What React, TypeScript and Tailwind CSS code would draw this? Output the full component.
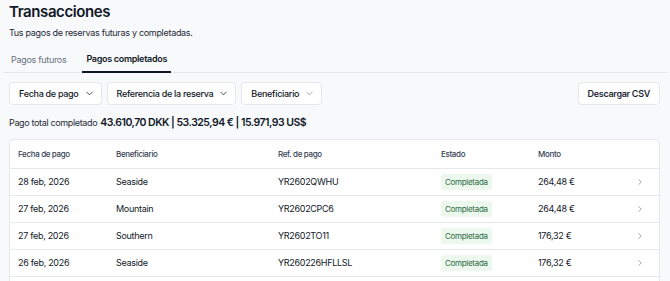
import React from 'react';
import { ChevronDown, ChevronRight } from 'lucide-react';

const rows = [
  { date: '28 feb, 2026', who: 'Seaside', ref: 'YR2602QWHU', amount: '264,48 €' },
  { date: '27 feb, 2026', who: 'Mountain', ref: 'YR2602CPC6', amount: '264,48 €' },
  { date: '27 feb, 2026', who: 'Southern', ref: 'YR2602TO11', amount: '176,32 €' },
  { date: '26 feb, 2026', who: 'Seaside', ref: 'YR260226HFLLSL', amount: '176,32 €' },
];

const cols = 'grid grid-cols-[98px_162px_163px_97px_1fr_24px] items-center pl-[8px]';

const FilterButton: React.FC<{ label: string; light?: boolean }> = ({ label, light }) => (
  <button className="h-[23px] pl-[9px] pr-[6px] flex items-center gap-[5px] bg-white border border-gray-200 rounded-[4px] text-[9px] tracking-[-0.3px] font-medium text-gray-900">
    {label}
    <ChevronDown size={11} strokeWidth={2} className={light ? 'text-gray-400' : 'text-gray-700'} />
  </button>
);

const App: React.FC = () => {
  return (
    <div
      className="min-h-screen bg-[#f8f9fa] text-gray-900 overflow-hidden"
      style={{ fontFamily: 'Inter, "Liberation Sans", sans-serif' }}
    >
      <div className="px-[9px]">
        <h1 className="text-[15px] leading-[24px] font-semibold tracking-[-0.4px]">Transacciones</h1>
        <p className="text-[9px] leading-[14px] mt-[2px] tracking-[-0.3px] text-gray-800">
          Tus pagos de reservas futuras y completadas.
        </p>

        {/* Tabs */}
        <div className="mt-[9px] h-[24px] flex border-b border-gray-200 -mx-[6px] px-[6px] text-[9px] tracking-[-0.3px]">
          <div className="px-[2px] flex items-center h-[22px] text-gray-500">Pagos futuros</div>
          <div className="ml-[14px] px-[4px] flex items-center h-[24px] pb-[2px] font-semibold text-gray-900 border-b-2 border-gray-900">
            Pagos completados
          </div>
        </div>

        {/* Filters */}
        <div className="mt-[9px] flex items-center gap-[5px]">
          <FilterButton label="Fecha de pago" />
          <FilterButton label="Referencia de la reserva" />
          <FilterButton label="Beneficiario" light />
          <button className="ml-auto mr-[1px] h-[23px] px-[9px] bg-white border border-gray-200 rounded-[4px] text-[9px] tracking-[-0.3px] font-semibold text-gray-800">
            Descargar CSV
          </button>
        </div>

        <div className="mt-[10px] h-[16px] flex items-center gap-[3px]">
          <span className="text-[9px] tracking-[-0.35px] text-gray-800">Pago total completado</span>
          <span className="text-[10.5px] tracking-[-0.5px] font-semibold text-gray-900">
            43.610,70 DKK | 53.325,94 € | 15.971,93 US$
          </span>
        </div>

        {/* Table */}
        <div className="mt-[8px] mr-[1px] bg-white border border-gray-200 rounded-[5px]">
          <div className={`${cols} h-[28px] text-[8px] tracking-[-0.35px] font-medium text-gray-700`}>
            <span>Fecha de pago</span>
            <span>Beneficiario</span>
            <span>Ref. de pago</span>
            <span>Estado</span>
            <span>Monto</span>
            <span />
          </div>
          {rows.map((r, i) => (
            <div
              key={i}
              className={`${cols} h-[27px] border-t border-gray-200 text-[9px] tracking-[-0.3px] text-gray-900`}
            >
              <span>{r.date}</span>
              <span>{r.who}</span>
              <span>{r.ref}</span>
              <span>
                <span className="inline-block px-[4px] py-[2px] rounded-[3px] bg-[#ecf7ee] text-[8px] tracking-[-0.3px] text-[#2f6b3f]">
                  Completada
                </span>
              </span>
              <span>{r.amount}</span>
              <ChevronRight size={10} strokeWidth={1.5} className="text-gray-500" />
            </div>
          ))}
          <div className="h-[20px] border-t border-gray-200" />
        </div>
      </div>
    </div>
  );
};

export default App;
